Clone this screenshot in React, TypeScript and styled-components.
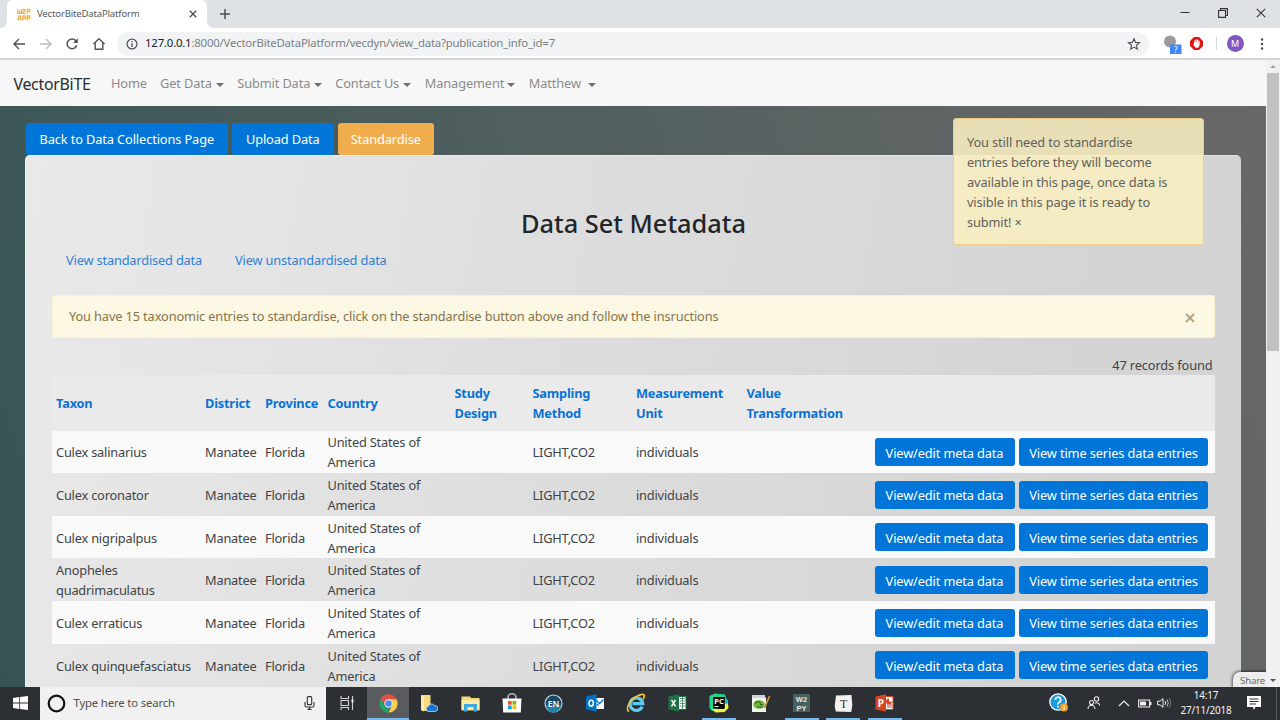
import React from "react";
import styled, { createGlobalStyle, css } from "styled-components";

const Global = createGlobalStyle`
  * { box-sizing: border-box; }
  body { margin: 0; overflow: hidden; }
  #root { height: 720px; }
`;

const Window = styled.div`
  width: 1280px;
  height: 720px;
  display: flex;
  flex-direction: column;
  overflow: hidden;
  font-family: "Noto Sans", sans-serif;
  font-size: 12.8px;
  letter-spacing: -0.13px;
  line-height: 20px;
  color: #414446;
  white-space: nowrap;
`;

/* ---------- browser chrome ---------- */
const TabStrip = styled.div`
  height: 28px;
  flex: none;
  display: flex;
  align-items: flex-start;
  padding-left: 7px;
  background: #dee1e6;
`;
const Tab = styled.div`
  position: relative;
  width: 200px;
  height: 28px;
  display: flex;
  align-items: center;
  padding: 0 8px 0 10px;
  background: #fff;
  border-radius: 6px 6px 0 0;
  color: #55595d;
  font-size: 9.6px;
  letter-spacing: -0.19px;
  &::before,
  &::after {
    content: "";
    position: absolute;
    bottom: 0;
    width: 6px;
    height: 6px;
  }
  &::before {
    left: -6px;
    background: radial-gradient(circle at 0 0, transparent 5.5px, #fff 6px);
  }
  &::after {
    right: -6px;
    background: radial-gradient(circle at 100% 0, transparent 5.5px, #fff 6px);
  }
`;
const TabTitle = styled.span`
  flex: 1;
  margin-left: 6px;
`;
const NewTab = styled.div`
  display: flex;
  margin: 8px 0 0 12px;
`;
const WindowButtons = styled.div`
  display: flex;
  align-items: center;
  gap: 28px;
  height: 25px;
  margin-left: auto;
  padding-right: 14px;
`;
const Toolbar = styled.div`
  height: 32px;
  flex: none;
  display: flex;
  align-items: center;
  padding: 1px 11px 0 12px;
  background: #fff;
  border-bottom: 2px solid #d6d7d8;
`;
const NavIcons = styled.div`
  display: flex;
  align-items: center;
  gap: 12.7px;
`;
const AddressBar = styled.div`
  flex: none;
  display: flex;
  align-items: center;
  width: 1032px;
  height: 24px;
  margin-left: 11px;
  padding: 0 8px;
  border-radius: 12px;
  background: #f1f3f4;
  color: #7c8084;
  font-size: 11.4px;
  letter-spacing: -0.21px;
`;
const Url = styled.span`
  flex: 1;
  margin-left: 7px;
  padding-bottom: 2px;
  b {
    font-weight: 400;
    color: #202124;
  }
`;
const Extensions = styled.div`
  display: flex;
  align-items: center;
  margin-left: auto;
`;
const Divider = styled.i`
  width: 1px;
  height: 13px;
  margin: 0 10px 0 13px;
  background: #d5d7da;
`;
const Avatar = styled.span`
  width: 17px;
  height: 17px;
  margin-right: 12.5px;
  border-radius: 50%;
  background: #7e57c2;
  color: #fff;
  font-size: 9px;
  line-height: 17px;
  text-align: center;
`;

/* ---------- page ---------- */
const Viewport = styled.div`
  height: 626.5px;
  flex: none;
  display: flex;
`;
const Page = styled.div`
  position: relative;
  width: 1266px;
  height: 100%;
  overflow: hidden;
  background: linear-gradient(72deg, #365454 0%, #5b6363 68%, #696867 100%);
`;
const Navbar = styled.nav`
  display: flex;
  align-items: center;
  height: 46px;
  padding: 0 13.5px;
  background: #f7f7f7;
`;
const Brand = styled.span`
  width: 97.5px;
  padding-top: 2px;
  color: #2a2c2e;
  font-size: 15.9px;
  letter-spacing: -0.28px;
`;
const NavLink = styled.a<{ $width: number }>`
  display: flex;
  align-items: center;
  width: ${(p) => p.$width}px;
  color: #8b8b8b;
`;
const Caret = styled.i<{ $gap?: number }>`
  margin: 4px 0 0 ${(p) => p.$gap ?? 4}px;
  border: 4px solid transparent;
  border-top-color: #6f6f6f;
  border-bottom: 0;
`;
const Actions = styled.div`
  display: flex;
  gap: 3.5px;
  padding: 17px 0 0 25.5px;
`;
const ActionButton = styled.button<{ $tone?: "warning"; $width: number }>`
  width: ${(p) => p.$width}px;
  height: 31.5px;
  padding: 1px 0 0;
  border: 0;
  border-radius: 3px;
  background: ${(p) => (p.$tone === "warning" ? "#f0ad4e" : "#0275d8")};
  color: #fff;
  font: inherit;
  letter-spacing: -0.12px;
`;
const Panel = styled.main`
  width: 1216px;
  height: 900px;
  margin-left: 25px;
  padding: 51px 26px 0 27px;
  border-radius: 5px;
  box-shadow: inset 1px 1px 0 rgba(255, 255, 255, 0.35);
  background: linear-gradient(100deg, #e9e9e9 0%, #dbdbdb 50%, #d4d4d4 80%, #d3d3d3 100%);
`;
const Title = styled.h3`
  margin: 0;
  color: #212529;
  font-size: 25.4px;
  font-weight: 500;
  line-height: 34px;
  letter-spacing: -0.03px;
  text-align: center;
`;
const DataLinks = styled.div`
  display: flex;
  gap: 33px;
  margin-top: 10px;
  padding-left: 14px;
  color: #2f7fd6;
  letter-spacing: -0.17px;
`;
const Alert = styled.div`
  display: flex;
  align-items: center;
  justify-content: space-between;
  height: 42.5px;
  margin-top: 25.5px;
  padding: 0 19px 0 16px;
  border: 1px solid #faf2cc;
  border-radius: 3px;
  background: #fcf8e3;
  color: #8a7348;
`;
const RecordCount = styled.div`
  margin-top: 17px;
  padding-right: 2.5px;
  text-align: right;
`;
const columns = css`
  display: grid;
  grid-template-columns: 149px 60px 62.5px 127px 78px 103.5px 110.5px 128px 1fr;
  align-items: center;
  padding-left: 4px;
`;
const HeadRow = styled.div`
  ${columns}
  height: 56px;
  background: #eaeaea;
  color: #0b72d6;
  font-weight: 700;
  letter-spacing: -0.2px;
`;
const Row = styled.div<{ $striped: boolean }>`
  ${columns}
  height: 42.67px;
  padding-top: 1px;
  background: ${(p) => (p.$striped ? "#f9f9f9" : "transparent")};
  letter-spacing: -0.2px;
`;
const RowActions = styled.div`
  display: flex;
  gap: 4.5px;
  padding-bottom: 0.5px;
  letter-spacing: -0.13px;
`;
const RowButton = styled.button<{ $width: number }>`
  width: ${(p) => p.$width}px;
  height: 28px;
  padding: 1px 0 0;
  border: 0;
  border-radius: 3px;
  background: #0275d8;
  color: #fff;
  font: inherit;
  letter-spacing: inherit;
`;
const Flash = styled.div`
  position: absolute;
  top: 58px;
  left: 953px;
  width: 250.5px;
  height: 126.5px;
  padding: 13px;
  border: 1px solid rgba(236, 195, 110, 0.7);
  border-radius: 3.5px;
  background: rgba(249, 238, 193, 0.89);
  color: #62615a;
`;
const ShareTip = styled.div`
  position: absolute;
  right: 0;
  bottom: 0;
  width: 33px;
  height: 15px;
  padding-left: 7px;
  border-radius: 7px 0 0 0;
  background: #ededed;
  box-shadow: 0 0 3px 1px rgba(0, 0, 0, 0.55);
  color: #6a6a6a;
  font-size: 9.6px;
  line-height: 17px;
`;
const Scrollbar = styled.div`
  width: 14px;
  display: flex;
  flex-direction: column;
  align-items: center;
  background: #f1f1f1;
`;
const ScrollArrow = styled.i<{ $down?: boolean }>`
  margin: ${(p) => (p.$down ? "auto 0 5px" : "5px 0 4.5px")};
  border: 3px solid transparent;
  ${(p) =>
    p.$down
      ? "border-top-color:#505050;border-bottom:0;"
      : "border-bottom-color:#a3a3a3;border-top:0;"}
`;
const Thumb = styled.div`
  width: 11.5px;
  height: 278px;
  background: #c1c1c1;
`;

/* ---------- taskbar ---------- */
const Taskbar = styled.footer`
  flex: 1;
  display: flex;
  background: #2c2f34;
`;
const Start = styled.div`
  width: 40px;
  display: flex;
  align-items: center;
  justify-content: center;
`;
const Search = styled.div`
  width: 286px;
  display: flex;
  align-items: center;
  padding: 0 11px 0 7px;
  background: #f1f1f1;
  color: #505050;
  font-size: 11.3px;
  letter-spacing: -0.14px;
`;
const SearchText = styled.span`
  flex: 1;
  margin-left: 7.5px;
`;
const Task = styled.div<{ $state?: "running" | "active" }>`
  width: 41.4px;
  position: relative;
  display: flex;
  align-items: center;
  justify-content: center;
  background: ${(p) => (p.$state === "active" ? "#595b5f" : "transparent")};
  ${(p) =>
    p.$state &&
    css`
      &::after {
        content: "";
        position: absolute;
        bottom: 0;
        left: ${p.$state === "active" ? 0 : 3.7}px;
        right: ${p.$state === "active" ? 0 : 3.7}px;
        height: 2.3px;
        background: #76b9ed;
      }
    `}
`;
const Tray = styled.div`
  display: flex;
  align-items: center;
  margin-left: auto;
`;
const Clock = styled.div`
  width: 60px;
  margin: 0 11px 0 4px;
  color: #f4f4f4;
  font-size: 9.9px;
  letter-spacing: -0.17px;
  line-height: 15.5px;
  text-align: center;
`;
const Peek = styled.i`
  align-self: stretch;
  width: 1px;
  margin: 0 3px 0 15px;
  background: #55585c;
`;

const S = ({ w, h = w, v, children, style }: { w: number; h?: number; v?: string; children: React.ReactNode; style?: React.CSSProperties }) => (
  <svg width={w} height={h} viewBox={v ?? `0 0 ${w} ${h}`} fill="none" style={style}>
    {children}
  </svg>
);
const dark = "#505357";

const glyph = { fontFamily: "Noto Sans, sans-serif", letterSpacing: 0 };

const Favicon = () => (
  <S w={14} h={13}>
    <g stroke="#efb650" strokeWidth="1.300">
      <path d="M.8 1v4.300h3.600V1M2.600 2.500v2.800M5.500 1.500H8v1.800H6v2h2.600M10.300 6V1.500h2.500v2.300h-2.500" />
      <path d="M.8 12.500 2 8h1.200l1.200 4.500M1.300 11h2.700M5.900 12.500V8h2.600v2.500H5.900M10.300 12.500V8h2.500v2.500h-2.500" />
    </g>
  </S>
);

const TaskIcons: { name: string; state?: "running" | "active"; icon: React.ReactNode }[] = [
  {
    name: "task view",
    icon: (
      <S w={16} h={14}>
        <path d="M2 0v2.500h7.500V0M2 14v-2.500h7.500V14M2 4.500h7.500v5H2zM13.500 0v14" stroke="#d0d0d0" strokeWidth="1.100" />
        <path d="M12.500 3.500h2v3h-2z" fill="#e8e8e8" />
      </S>
    ),
  },
  {
    name: "chrome",
    state: "active",
    icon: (
      <S w={19} v="0 0 48 48">
        <path d="M24 24 4.100 12.500A23 23 0 0 1 43.900 12.500z" fill="#dd5144" />
        <path d="M24 24v23A23 23 0 0 1 4.100 12.500z" fill="#1da462" />
        <path d="M24 13.500h20.500a23 23 0 0 1-20.500 33.500l9-17.700z" fill="#ffcd46" />
        <path d="M4.100 12.500A23 23 0 0 1 44.500 13.500H24L15 29z" fill="#dd5144" />
        <circle cx="24" cy="24" r="10.500" fill="#f1f1f1" />
        <circle cx="24" cy="24" r="8.300" fill="#4c8bf5" />
      </S>
    ),
  },
  {
    name: "cloud folder",
    icon: (
      <S w={18} h={19}>
        <path d="M1 1h9.500v9l1 1v6H3l-2-1z" fill="#f9dc7f" />
        <path d="M1 1l3 2v14.500L1 16z" fill="#fcebb0" />
        <path d="M8 17.500a2.700 2.700 0 0 1 .3-5.200 3.300 3.300 0 0 1 6-.8 3 3 0 0 1 1 6z" fill="#1b76d1" stroke="#dceafa" strokeWidth=".7" />
      </S>
    ),
  },
  {
    name: "explorer",
    icon: (
      <S w={19} h={17}>
        <path d="M.5 3V1.500h8.500l1 1.500h8.500v12.500H.5z" fill="#f8d775" />
        <path d="M.5 5h18v9.500H.5z" fill="#fdeaa5" />
        <path d="M3 16.500V9h13v7.500h-3.500V12h-6v4.500z" fill="#3fa9e0" />
      </S>
    ),
  },
  {
    name: "store",
    icon: (
      <S w={20} h={20}>
        <path d="M6 6V4a4 3.200 0 0 1 8 0v2" stroke="#bfc1c3" strokeWidth="1.500" />
        <path d="M.5 5.500h19l-.7 14H1.200z" fill="#fff" />
        <path d="M6 8h3.700v3.700H6z" fill="#f25022" />
        <path d="M10.500 8h3.700v3.700h-3.700z" fill="#7fba00" />
        <path d="M6 12.500h3.700v3.700H6z" fill="#00a4ef" />
        <path d="M10.500 12.500h3.700v3.700h-3.700z" fill="#ffb900" />
      </S>
    ),
  },
  {
    name: "endnote",
    icon: (
      <S w={19}>
        <circle cx="9.500" cy="9.500" r="8.500" fill="#16486a" stroke="#d3dadd" strokeWidth="1.100" />
        <path d="M2 11a7.500 7.500 0 0 0 15 0z" fill="#1d84a8" />
        <text x="9.500" y="12.600" fontSize="8.500" fontWeight="600" textAnchor="middle" fill="#fff" style={glyph}>EN</text>
      </S>
    ),
  },
  {
    name: "outlook",
    icon: (
      <S w={18} h={18}>
        <path d="M9 4h9v11H9z" fill="#fff" />
        <path d="m9.500 5.500 4 4 4-4M11 10l1.500 1.500" stroke="#0072c6" strokeWidth="1.300" />
        <path d="M0 2.500 10.500.3v17.400L0 15.500z" fill="#0072c6" />
        <ellipse cx="5.200" cy="9.200" rx="2.200" ry="2.900" stroke="#fff" strokeWidth="1.500" />
      </S>
    ),
  },
  {
    name: "internet explorer",
    icon: (
      <S w={20} h={20}>
        <path d="M16.200 13.700A6.300 6.300 0 1 1 16.700 10.700H6.500" stroke="#5ecbf5" strokeWidth="3.200" />
        <path d="M3 18.500C-1 16 4 6 11 3.300 15 1 19 .5 18.300 3.500c-.2 1-.8 2-1.300 2.800" stroke="#f3c63a" strokeWidth="1.600" />
      </S>
    ),
  },
  {
    name: "excel",
    icon: (
      <S w={19} h={18}>
        <path d="M10 2.500h8v13h-8z" fill="#fff" stroke="#207245" />
        <path d="M12 4.500h5M12 7h5M12 9.500h5M12 12h5M14.500 3v12" stroke="#207245" strokeWidth=".7" />
        <path d="M.5 2.500 11 .3v17.400L.5 15.500z" fill="#207245" />
        <path d="m3.500 5.800 4 6.500m0-6.500-4 6.500" stroke="#fff" strokeWidth="1.500" />
      </S>
    ),
  },
  {
    name: "pycharm",
    state: "running",
    icon: (
      <S w={20} h={20}>
        <path d="M.5 3 6 .5l10 1 1.500 5.500L15 12 3 18 .5 15z" fill="#21d789" />
        <path d="M15 5l3.500 2 1 8-4 4-9 .5-4-3.500h12.500z" fill="#f4ef45" />
        <path d="M16 3.500l3.500 5-2 3-1.500-1z" fill="#12b5e6" />
        <path d="M4.200 4h11.600v11.600H4.200z" fill="#050505" />
        <text x="10" y="10.700" fontSize="7.500" fontWeight="700" textAnchor="middle" fill="#fff" style={glyph}>PC</text>
        <path d="M5.500 13.500h4" stroke="#fff" />
      </S>
    ),
  },
  {
    name: "notepad++",
    icon: (
      <S w={20} h={19}>
        <path d="M1 1h12l2 3v14H1z" fill="#f2f4ee" />
        <path d="M1 1h13v3H1z" fill="#cfd4d4" />
        <ellipse cx="8" cy="10.500" rx="5.800" ry="4.300" fill="#71b83b" />
        <path d="M4 9.500q3-4 6 0M6 13h6M9 10.500h3" stroke="#31631b" strokeWidth="1.200" />
        <path d="m18.500 2-5 12" stroke="#c9913a" strokeWidth="1.800" />
      </S>
    ),
  },
  {
    name: "web2py",
    state: "running",
    icon: (
      <S w={17} h={18}>
        <path d="M0 0h17v18H0z" fill="#47605f" />
        <text x="8.500" y="7.500" fontSize="7.600" fontWeight="700" textAnchor="middle" fill="#e6eaea" style={{ ...glyph, fontFamily: "Liberation Sans, sans-serif" }}>W2</text>
        <text x="8.500" y="16.500" fontSize="7.600" fontWeight="700" textAnchor="middle" fill="#e6eaea" style={{ ...glyph, fontFamily: "Liberation Sans, sans-serif" }}>PY</text>
      </S>
    ),
  },
  {
    name: "typora",
    state: "running",
    icon: (
      <S w={19} h={19}>
        <path d="M2 1.500 17.500 1l.8 10-1 7-15.500-.5L.7 12z" fill="#f2f2f2" />
        <text x="9.700" y="14" fontSize="12" textAnchor="middle" fill="#333" style={{ ...glyph, fontFamily: "Liberation Serif, serif" }}>T</text>
      </S>
    ),
  },
  {
    name: "powerpoint",
    state: "running",
    icon: (
      <S w={19} h={18}>
        <path d="M10 2.500h8v13h-8z" fill="#fff" stroke="#d24726" />
        <path d="M12 11h5M12 13h5" stroke="#d24726" />
        <path d="M14 4.500v3h3a3 3 0 1 1-3-3z" fill="#d24726" />
        <path d="M.5 2.500 11 .3v17.400L.5 15.500z" fill="#d24726" />
        <text x="5.800" y="12.700" fontSize="10" fontWeight="700" textAnchor="middle" fill="#fff" style={glyph}>P</text>
      </S>
    ),
  },
];

const taxa: React.ReactNode[] = [
  "Culex salinarius",
  "Culex coronator",
  "Culex nigripalpus",
  <>Anopheles<br />quadrimaculatus</>,
  "Culex erraticus",
  "Culex quinquefasciatus",
];

export default function App() {
  return (
    <Window>
      <Global />
      <TabStrip>
        <Tab>
          <Favicon />
          <TabTitle>VectorBiteDataPlatform</TabTitle>
          <S w={8} style={{ marginRight: 2 }}>
            <path d="m.8.8 6.400 6.400m0-6.400L.8 7.200" stroke="#45484c" strokeWidth="1.300" />
          </S>
        </Tab>
        <NewTab>
          <S w={12}>
            <path d="M6 1v10M1 6h10" stroke="#4b4e52" strokeWidth="1.500" />
          </S>
        </NewTab>
        <WindowButtons>
          <S w={10}><path d="M.5 4.500h9" stroke="#333" /></S>
          <S w={10}>
            <path d="M.6 2.500h6.900v6.900H.6zM2.500 2.500V.6h6.900v6.900H7.500" stroke="#333" strokeWidth="1.100" />
          </S>
          <S w={10}><path d="m.8.8 8.400 8.400m0-8.400L.8 9.200" stroke="#333" strokeWidth="1.100" /></S>
        </WindowButtons>
      </TabStrip>

      <Toolbar>
        <NavIcons>
          <S w={14}><path d="M13 7H2m5-5L2 7l5 5" stroke={dark} strokeWidth="1.400" /></S>
          <S w={14}><path d="M1 7h11M7 2l5 5-5 5" stroke="#babcbe" strokeWidth="1.400" /></S>
          <S w={14}>
            <path d="M11.700 8.200A4.900 4.900 0 1 1 10.600 3.500l1.200 1.300" stroke={dark} strokeWidth="1.500" />
            <path d="M12.800 1.300v4.800H8z" fill={dark} />
          </S>
          <S w={14}><path d="M1.500 7 7 1.800 12.500 7M3.200 6v6.200h7.600V6" stroke={dark} strokeWidth="1.400" /></S>
        </NavIcons>
        <AddressBar>
          <S w={12} style={{ marginLeft: 1 }}>
            <circle cx="6" cy="6" r="4.900" stroke={dark} strokeWidth="1.200" />
            <path d="M6 5.200V9M6 3v1.300" stroke={dark} strokeWidth="1.300" />
          </S>
          <Url><b>127.0.0.1</b>:8000/VectorBiteDataPlatform/vecdyn/view_data?publication_info_id=7</Url>
          <S w={14} v="0 0 24 24">
            <path d="m12 3 2.700 6.200 6.700.6-5.100 4.400 1.500 6.600L12 17.300l-5.800 3.500 1.500-6.600L2.600 9.800l6.700-.6z" stroke={dark} strokeWidth="2" />
          </S>
        </AddressBar>
        <Extensions>
          <S w={19} h={20} style={{ marginTop: 2 }}>
            <circle cx="6" cy="6.500" r="6" fill="#9b9b9b" />
            <path d="M6 9.500h11.500V19H6z" fill="#4285f4" />
            <text x="11.700" y="17.500" fontSize="8" textAnchor="middle" fill="#fff" style={glyph}>?</text>
          </S>
          <S w={13} style={{ marginLeft: 7 }}>
            <path d="M4 0h5l4 4v5l-4 4H4L0 9V4z" fill="#e01616" />
            <path d="M4.800 6V3.700M6.200 5.500V2.700M7.600 5.500V3M9 6V4" stroke="#fff" strokeWidth="1.100" strokeLinecap="round" />
            <path d="M4.200 5.500h5.400V8L8.300 10.700H5.500L3.500 8z" fill="#fff" />
          </S>
          <Divider />
          <Avatar>M</Avatar>
          <S w={12} style={{ marginRight: 1 }}>
            <g fill={dark}><circle cx="6" cy="1.500" r="1.250" /><circle cx="6" cy="6" r="1.250" /><circle cx="6" cy="10.500" r="1.250" /></g>
          </S>
        </Extensions>
      </Toolbar>

      <Viewport>
        <Page>
          <Navbar>
            <Brand>VectorBiTE</Brand>
            <NavLink $width={49}>Home</NavLink>
            <NavLink $width={77.3}>Get Data<Caret /></NavLink>
            <NavLink $width={98}>Submit Data<Caret /></NavLink>
            <NavLink $width={89.5}>Contact Us<Caret /></NavLink>
            <NavLink $width={104}>Management<Caret $gap={3} /></NavLink>
            <NavLink $width={80}>Matthew<Caret $gap={7.5} /></NavLink>
          </Navbar>
          <Actions>
            <ActionButton $width={202.5}>Back to Data Collections Page</ActionButton>
            <ActionButton $width={102.5}>Upload Data</ActionButton>
            <ActionButton $width={96.5} $tone="warning">Standardise</ActionButton>
          </Actions>
          <Panel>
            <Title>Data Set Metadata</Title>
            <DataLinks>
              <span>View standardised data</span>
              <span>View unstandardised data</span>
            </DataLinks>
            <Alert>
              <span>You have 15 taxonomic entries to standardise, click on the standardise button above and follow the insructions</span>
              <S w={10} style={{ marginTop: 3 }}><path d="m1 1 8 8m0-8L1 9" stroke="#b9a683" strokeWidth="2" /></S>
            </Alert>
            <RecordCount>47 records found</RecordCount>
            <HeadRow>
              <span>Taxon</span>
              <span>District</span>
              <span>Province</span>
              <span>Country</span>
              <span>Study<br />Design</span>
              <span>Sampling<br />Method</span>
              <span>Measurement<br />Unit</span>
              <span>Value<br />Transformation</span>
              <span />
            </HeadRow>
            {taxa.map((taxon, i) => (
              <Row key={i} $striped={i % 2 === 0}>
                <span>{taxon}</span>
                <span>Manatee</span>
                <span>Florida</span>
                <span>United States of<br />America</span>
                <span />
                <span>LIGHT,CO2</span>
                <span>individuals</span>
                <span />
                <RowActions>
                  <RowButton $width={140}>View/edit meta data</RowButton>
                  <RowButton $width={189}>View time series data entries</RowButton>
                </RowActions>
              </Row>
            ))}
          </Panel>
          <Flash>
            You still need to standardise<br />
            entries before they will become<br />
            available in this page, once data is<br />
            visible in this page it is ready to<br />
            submit! ×
          </Flash>
          <ShareTip>Share</ShareTip>
        </Page>
        <Scrollbar>
          <ScrollArrow />
          <Thumb />
          <ScrollArrow $down />
        </Scrollbar>
      </Viewport>

      <Taskbar>
        <Start>
          <S w={15} h={14}>
            <path d="M0 2 6.300 1.100v5.500H0zM7.100 1 15 0v6.600H7.100zM0 7.400h6.300v5.500L0 12zM7.100 7.400H15V14l-7.900-1z" fill="#fff" />
          </S>
        </Start>
        <Search>
          <S w={19}><circle cx="9.500" cy="9.500" r="7.800" stroke="#111" strokeWidth="2.200" /></S>
          <SearchText>Type here to search</SearchText>
          <S w={11} h={14}>
            <rect x="3.300" y=".6" width="4.400" height="8" rx="1" stroke="#333" strokeWidth="1.100" />
            <path d="M1 6v3.500q0 1.500 1.500 1.500h6q1.500 0 1.500-1.500V6M5.500 11v2.800M3.500 13.400h4" stroke="#333" strokeWidth="1.100" />
          </S>
        </Search>
        {TaskIcons.map((t) => (
          <Task key={t.name} $state={t.state}>{t.icon}</Task>
        ))}
        <Tray>
          <S w={20}>
            <circle cx="9" cy="9" r="8.200" fill="#1b9bd8" stroke="#fff" strokeWidth="1.300" />
            <path d="M6.300 7a2.700 2.700 0 1 1 4 2.300Q9 10 9 11.500M9 12.800v1.700" stroke="#fff" strokeWidth="1.700" />
            <circle cx="15" cy="14.500" r="3.900" fill="#f4a62a" />
            <path d="M15 14v2.500M15 12.300v.9" stroke="#fff" strokeWidth="1.100" />
          </S>
          <S w={14} style={{ marginLeft: 18 }}>
            <g stroke="#eee" strokeWidth="1.100">
              <circle cx="4.500" cy="6.500" r="2" /><path d="M1 13a3.500 3.800 0 0 1 7 0" />
              <circle cx="9.500" cy="3" r="2.200" /><path d="M8 7.200a3.200 3.200 0 0 1 4.800 2.300" />
            </g>
          </S>
          <S w={12} h={7} style={{ marginLeft: 17 }}><path d="M1 6 6 1l5 5" stroke="#eee" strokeWidth="1.200" /></S>
          <S w={14} h={9} style={{ marginLeft: 8 }}>
            <path d="M.6 1h11v7H.6z" stroke="#eee" strokeWidth="1.100" /><path d="M2 2.500h6v4H2zM12 3h1.500v3H12z" fill="#eee" />
          </S>
          <S w={15} h={12} style={{ marginLeft: 5 }}>
            <path d="M.6 4.200H3L6 1.500v9L3 7.800H.6zM8 4q1.500 2 0 4" stroke="#eee" />
            <path d="M10 2.500q2.500 3.500 0 7" stroke="#bbb" /><path d="M12 1q3.500 5 0 10" stroke="#777" />
          </S>
          <Clock>14:17<br />27/11/2018</Clock>
          <S w={14} h={14}>
            <path d="M0 0h14v11H8.500L6.800 14 6 11H0z" fill="#fff" />
            <path d="M2.500 3h9M2.500 5.500h9M2.500 8H9" stroke="#2c2f34" />
          </S>
          <Peek />
        </Tray>
      </Taskbar>
    </Window>
  );
}
